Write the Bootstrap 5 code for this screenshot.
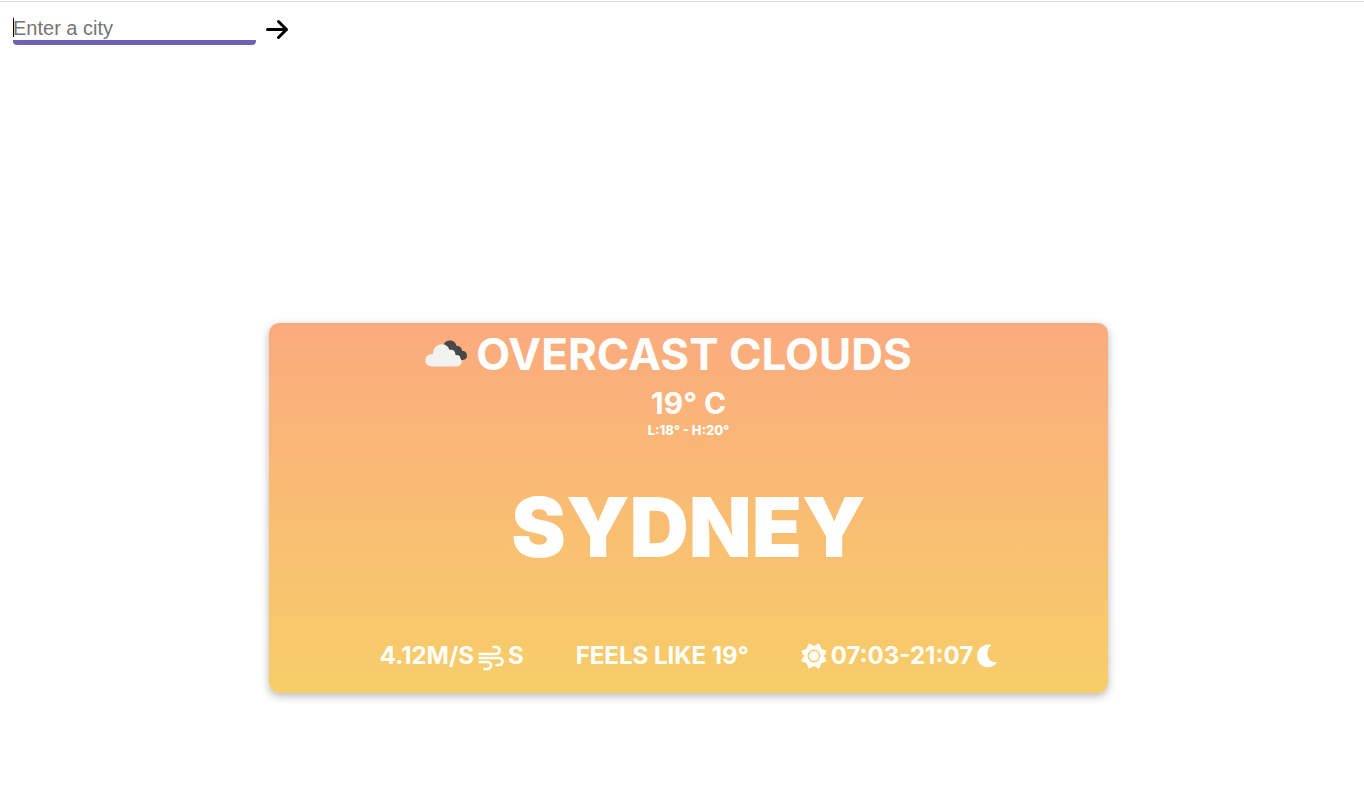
<!DOCTYPE html>
<html lang="en">
<head>
<meta charset="utf-8">
<meta name="viewport" content="width=device-width, initial-scale=1">
<title>Weather</title>
<link href="https://cdn.jsdelivr.net/npm/bootstrap@5.3.0/dist/css/bootstrap.min.css" rel="stylesheet">
<style>
  body { font-family: Inter, "Open Sans", sans-serif; background: #fff; border-top: 1px solid #dcdcdc; margin-top: 1px; }
  .page { padding-left: 13px; padding-bottom: 40px; }
  .search { padding-top: 14px; gap: 9px; height: 44px; }
  .search .btn { margin-top: -1px; }
  .city-input { font: 20px/24px "Liberation Sans", Arial, sans-serif; width: 243px; height: 29px; padding: 0; border: 0; border-bottom: 5px solid #7060b4; border-radius: 4px; outline: 0; background: linear-gradient(#000, #000) 0 0 / 1px 21px no-repeat; }
  .city-input::placeholder { color: #757575; opacity: 1; }
  .weather { width: 62.1%; min-height: 370px; margin-top: 277px; border-radius: 10px; color: #fff; background: linear-gradient(#fbab7e, #f7ce68); box-shadow: 0 3px 8px rgba(50, 50, 70, .35); text-transform: uppercase; }
  .sky { font-size: 44px; line-height: 48px; font-weight: 700; padding-top: 7px; padding-right: 40px; gap: 8px; }
  .temp { font-size: 30px; line-height: 36px; font-weight: 700; margin-top: 7px; }
  .range { font-size: 13px; line-height: 18px; font-weight: 800; }
  .place { font-size: 82px; line-height: 92px; font-weight: 900; margin: 43px 0 0; }
  .facts { font-size: 24px; line-height: 30px; font-weight: 700; gap: 52px; padding: 67px 0 22px; }
</style>
</head>
<body>
<div class="page">
  <form class="search d-flex align-items-start" onsubmit="return false">
    <input class="city-input" type="text" placeholder="Enter a city" aria-label="City">
    <button class="btn p-0 border-0 lh-1" type="submit" aria-label="Search">
      <svg width="24" height="28" viewBox="0 0 24 28" fill="none" stroke="#000" stroke-width="3" stroke-linecap="round" stroke-linejoin="round"><path d="M2.500 14.500h19M13.500 6.500l8 8-8 8"/></svg>
    </button>
  </form>
  <main class="weather mx-auto d-flex flex-column align-items-center">
    <div class="sky d-flex align-items-center">
      <svg width="43" height="28" viewBox="0 0 43 28" aria-hidden="true">
        <path fill="#48484a" d="M18 8C18 3 21 .5 25 .5c4 0 6 2.500 6.500 5.500 3.500-.5 5.500 2 5.500 5 3.500-.5 5 2 5 4.500 0 4-3 5-7 4.500l-12-5z"/>
        <path fill="#f2f2f0" d="M7 26.500c-9 0-9-12.500 1-12.500C8 2.500 22 1 24.500 10c3.500-1 6 1.500 6 5 3-.5 5 1 5 3.500 2.500 3 .5 8-3.500 8z"/>
      </svg>
      <span>Overcast clouds</span>
    </div>
    <div class="temp">19° C</div>
    <div class="range">L:18° - H:20°</div>
    <h1 class="place">Sydney</h1>
    <div class="facts d-flex flex-wrap justify-content-center">
      <div class="d-flex align-items-center gap-1">
        <span>4.12m/s</span>
        <svg width="26" height="30" viewBox="0 0 26 30" fill="none" stroke="#fff" stroke-width="2.700" aria-hidden="true"><path d="M.5 13h17.500a3.500 3.500 0 0 0 0-7h-3.500M.5 17h20.500a3.500 3.500 0 0 1 0 7h-3.500M.5 21h9a3.500 3.500 0 0 1 0 7h-4"/></svg>
        <span>S</span>
      </div>
      <div>Feels like 19°</div>
      <div class="d-flex align-items-center gap-1">
        <svg width="26" height="26" viewBox="0 0 25 25" aria-hidden="true"><path fill="#fff" stroke="#fff" stroke-linejoin="round" d="M12.500 3.500L17.100 1l2.100 4.800L24 7.900l-2.500 4.600L24 17.100l-4.800 2.100L17.100 24l-4.600-2.500L7.900 24l-2.100-4.800L1 17.100l2.500-4.600L1 7.900l4.800-2.100L7.900 1z"/><circle cx="12.500" cy="12.500" r="5.500" fill="none" stroke="#f8c969" stroke-width="1.300"/></svg>
        <span>07:03-21:07</span>
        <svg width="20" height="24" viewBox="0 0 19 23" aria-hidden="true"><path fill="#fff" d="M12.500.5c1.200.1 1.300.7.500 1.200-6 5-3 16.500 5 15.500 1 0 1.200.6.500 1.300C12 26 0 22 0 11.500 0 5 5 0 12.500.5z"/></svg>
      </div>
    </div>
  </main>
</div>
<script src="https://cdn.jsdelivr.net/npm/bootstrap@5.3.0/dist/js/bootstrap.bundle.min.js"></script>
</body>
</html>
